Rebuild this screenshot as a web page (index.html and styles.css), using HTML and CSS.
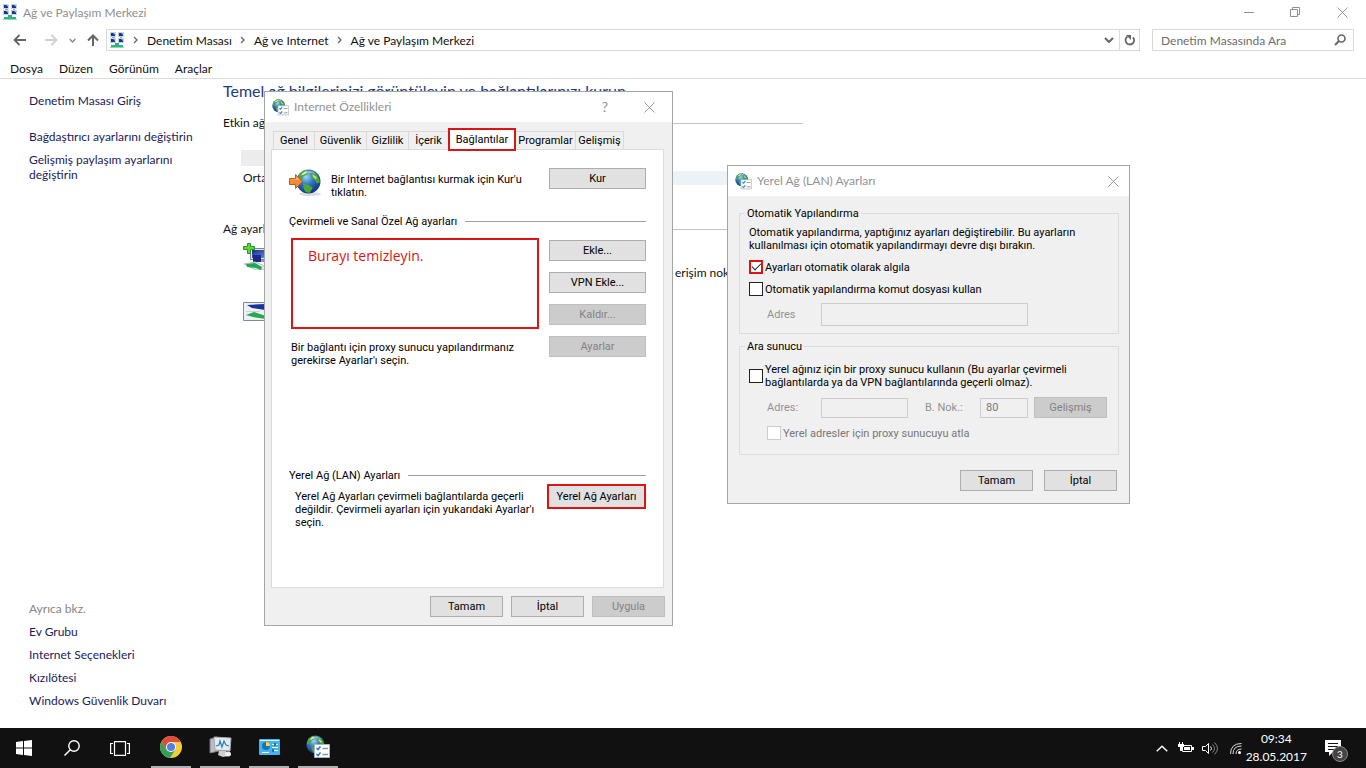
FILE: index.html
```html
<!DOCTYPE html>
<html lang="tr">
<head>
<meta charset="utf-8">
<title>Ağ ve Paylaşım Merkezi</title>
<link rel="stylesheet" href="styles.css">
</head>
<body>
<svg class="defs" aria-hidden="true">
  <defs>
    <radialGradient id="globeFill" cx="40%" cy="30%" r="70%">
      <stop offset="0" stop-color="#9fd8f5"/><stop offset=".45" stop-color="#3577c4"/><stop offset="1" stop-color="#12357a"/>
    </radialGradient>
    <linearGradient id="screenFill" x1="0" y1="0" x2="1" y2="1">
      <stop offset="0" stop-color="#1a2a8c"/><stop offset="1" stop-color="#6d92e0"/>
    </linearGradient>
    <symbol id="network" viewBox="0 0 16 16">
      <g fill="#c9d2dd"><path d="M1 0h6v5H1zM9 0h6v5H9zM1 6h6v5H1zM9 6h6v5H9z"/></g>
      <g fill="#17328f"><path d="M2 1h4v3H2zM10 1h4v3h-4zM2 7h4v3H2zM10 7h4v3h-4z"/></g>
      <path fill="#84a9e8" d="M4 1h2v2zM12 1h2v2zM4 7h2v2zM12 7h2v2z"/>
      <path fill="#98a5b5" d="M3 5h3v1H3zM11 5h2v1h-2z"/>
      <path fill="#2fb47c" d="M6 11h4v2h4v2H2v-2h4z"/><path fill="#8adbb4" d="M1 15h14v1H1z"/>
    </symbol>
    <symbol id="globe" viewBox="0 0 24 24">
      <circle cx="12" cy="12" r="11.5" fill="url(#globeFill)"/>
      <path fill="#4da63c" d="M3 5 8 1l4 1-1 3-4 2-2 4-4 1zM15 3l4 1 3 5 1 4-3 1-2-4-3-1-1-3zM7 14l5 1 4 3-3 5-4-1-2-4z"/>
      <path fill="#b6e58b" d="m5 5 4-3 2 1-4 3zM16 5l4 3-1 2-3-3z"/>
      <path fill="#fff" opacity=".35" d="M4 7C7 1 16 0 19 5c-5-2-10-1-15 2z"/>
    </symbol>
    <symbol id="globe-list" viewBox="0 0 24 24">
      <svg width="19" height="19"><use href="#globe"/></svg>
      <path fill="#fff" stroke="#a9b3bd" d="M8.500 9.500h15v13h-15z"/>
      <path fill="none" stroke="#2b7cc9" stroke-width="1.600" d="m10.500 13 1.500 1.500 2.500-3M10.500 19l1.500 1.500 2.500-3"/>
      <path stroke="#8d969e" stroke-width="1.300" d="M16.500 13.500H22M16.500 19.500H22"/>
    </symbol>
    <symbol id="close" viewBox="0 0 12 12"><path fill="none" stroke="currentColor" d="m.5.5 11 11m0-11-11 11"/></symbol>
    <symbol id="chevron" viewBox="0 0 10 6"><path fill="none" stroke="currentColor" stroke-width="2" d="m1 1 4 4 4-4"/></symbol>
    <symbol id="caret" viewBox="0 0 5 8"><path fill="none" stroke="currentColor" stroke-width="1.300" d="m1 1 3 3-3 3"/></symbol>
    <symbol id="monitors" viewBox="0 0 28 24">
      <path fill="#e3e7ec" stroke="#7c8794" d="M7.500 2.500h19v11h-19z"/><path fill="url(#screenFill)" d="M9 4h16v8H9z"/>
      <path fill="#1a2a8c" d="M10 9h8v7h-8z"/><path fill="#8e9cae" d="M18 14h6v2h-6z"/>
      <path fill="#dff3e5" stroke="#b5c3bb" d="m1 18 11-2 8 3 2 4-9 1z"/><path fill="#23a557" d="m3 18 9-1 7 4-1 3-5-2-9-1z"/>
    </symbol>
  </defs>
</svg>

<div class="desktop">
  <main class="explorer">
    <header class="titlebar">
      <svg class="icon16"><use href="#network"/></svg>
      <h1>Ağ ve Paylaşım Merkezi</h1>
      <div class="window-buttons">
        <button aria-label="Simge durumuna küçült"><svg width="10" height="10"><path stroke="currentColor" d="M0 5.500h10"/></svg></button>
        <button aria-label="Önceki boyut"><svg width="10" height="10"><path fill="none" stroke="currentColor" d="M.5 2.500h7v7h-7zM2.500 2.500v-2h7v7h-2"/></svg></button>
        <button aria-label="Kapat"><svg width="11" height="11"><use href="#close"/></svg></button>
      </div>
    </header>

    <div class="address-row">
      <div class="nav-buttons">
        <button class="back" aria-label="Geri"><svg width="13" height="12"><path fill="none" stroke="#666" stroke-width="1.800" d="M13 6H1.500M6.500 1l-5 5 5 5"/></svg></button>
        <button aria-label="İleri" disabled><svg width="13" height="12"><path fill="none" stroke="#d0d0d0" stroke-width="1.800" d="M0 6h11.500M6.500 1l5 5-5 5"/></svg></button>
        <button aria-label="Son konumlar"><svg width="7" height="5"><use href="#chevron"/></svg></button>
        <button aria-label="Yukarı"><svg width="12" height="12"><path fill="none" stroke="#666" stroke-width="2" d="M6 12V2M1 6.500l5-5 5 5"/></svg></button>
      </div>
      <nav class="address" aria-label="Adres">
        <svg class="icon16"><use href="#network"/></svg>
        <svg class="caret"><use href="#caret"/></svg><a href="#">Denetim Masası</a>
        <svg class="caret"><use href="#caret"/></svg><a href="#">Ağ ve Internet</a>
        <svg class="caret"><use href="#caret"/></svg><a href="#">Ağ ve Paylaşım Merkezi</a>
        <button class="drop" aria-label="Önceki konumlar"><svg width="10" height="6"><use href="#chevron"/></svg></button>
        <button class="refresh" aria-label="Yenile"><svg width="12" height="12"><path fill="none" stroke="#666" stroke-width="1.800" d="M3.500 2.600A4.300 4.300 0 1 0 9 3.300"/><path fill="#666" d="M2 1h5v5z"/></svg></button>
      </nav>
      <label class="search">
        <input type="search" placeholder="Denetim Masasında Ara" aria-label="Denetim Masasında Ara">
        <svg width="12" height="12"><circle cx="7.500" cy="4.500" r="3.500" fill="none" stroke="#666" stroke-width="1.600"/><path stroke="#666" stroke-width="2" d="M5 7 1 11"/></svg>
      </label>
    </div>

    <nav class="menubar" aria-label="Menü">
      <button>Dosya</button><button>Düzen</button><button>Görünüm</button><button>Araçlar</button>
    </nav>

    <div class="body">
      <aside class="sidebar">
        <div class="side-top">
          <a class="home" href="#">Denetim Masası Giriş</a>
          <a href="#">Bağdaştırıcı ayarlarını değiştirin</a>
          <a href="#">Gelişmiş paylaşım ayarlarını değiştirin</a>
        </div>
        <div class="side-bottom">
          <span class="muted">Ayrıca bkz.</span>
          <a href="#">Ev Grubu</a>
          <a href="#">Internet Seçenekleri</a>
          <a href="#">Kızılötesi</a>
          <a href="#">Windows Güvenlik Duvarı</a>
        </div>
      </aside>
      <section class="content">
        <h2>Temel ağ bilgilerinizi görüntüleyin ve bağlantılarınızı kurun</h2>
        <div class="rule first"><span>Etkin ağlar</span></div>
        <div class="net-name"></div>
        <div class="net-row"><span>Ortak ağ</span><div class="net-link"></div></div>
        <div class="rule"><span>Ağ ayarları</span></div>
        <div class="task">
          <svg width="28" height="28" viewBox="0 0 28 28"><svg y="3" width="28" height="24"><use href="#monitors"/></svg><path fill="#62d23f" stroke="#279a1c" d="M4.500.5h3v3h4v3h-4v4h-3v-4h-4v-3h4z"/></svg>
          <span>erişim noktası</span>
        </div>
        <div class="task second">
          <svg width="28" height="20" viewBox="0 0 28 20"><path fill="#edf0f4" stroke="#818b96" d="M.5.5h27v18H.5z"/><path fill="#1b329e" d="m4 3 18-1v6L9 6z"/><path fill="#c7d1df" d="M3 9h14v1H3z"/><path fill="#27a84e" d="m3 13 8-3 12 4v3l-13-2z"/></svg>
        </div>
      </section>
    </div>
  </main>

  <section class="dialog internet" role="dialog" aria-labelledby="inet-title">
    <header class="dialog-title">
      <svg class="icon17"><use href="#globe-list"/></svg>
      <h2 id="inet-title">Internet Özellikleri</h2>
      <button class="help" aria-label="Yardım">?</button>
      <button aria-label="Kapat"><svg width="11" height="11"><use href="#close"/></svg></button>
    </header>
    <div class="tabs" role="tablist">
      <button role="tab" class="w42">Genel</button><button role="tab" class="w52">Güvenlik</button><button role="tab" class="w42">Gizlilik</button><button role="tab" class="w40">İçerik</button><button role="tab" class="active" aria-selected="true">Bağlantılar</button><button role="tab" class="w60">Programlar</button><button role="tab" class="w48">Gelişmiş</button>
    </div>
    <div class="panel" role="tabpanel">
      <div class="setup">
        <svg width="34" height="28" viewBox="0 0 34 28"><ellipse cx="21" cy="26" rx="11" ry="2" fill="#d9dde1"/><svg x="7" y="1" width="25" height="25"><use href="#globe"/></svg><path fill="#f58a34" stroke="#c55d17" d="M.5 10.500h6v-4l7 7-7 7v-4h-6z"/><path fill="#ffc187" d="M1 11h6.500V9l3 3z"/></svg>
        <p>Bir Internet bağlantısı kurmak için Kur'u tıklatın.</p>
        <button class="btn">Kur</button>
      </div>
      <h3 class="section">Çevirmeli ve Sanal Özel Ağ ayarları</h3>
      <div class="dialup">
        <div class="dialup-left">
          <div class="list" role="listbox" aria-label="Bağlantılar">Burayı temizleyin.</div>
          <p>Bir bağlantı için proxy sunucu yapılandırmanız gerekirse Ayarlar'ı seçin.</p>
        </div>
        <div class="dialup-buttons">
          <button class="btn">Ekle...</button>
          <button class="btn">VPN Ekle...</button>
          <button class="btn" disabled>Kaldır...</button>
          <button class="btn" disabled>Ayarlar</button>
        </div>
      </div>
      <h3 class="section lan-head">Yerel Ağ (LAN) Ayarları</h3>
      <div class="lan">
        <p>Yerel Ağ Ayarları çevirmeli bağlantılarda geçerli değildir. Çevirmeli ayarları için yukarıdaki Ayarlar'ı seçin.</p>
        <button class="btn marked">Yerel Ağ Ayarları</button>
      </div>
    </div>
    <footer class="actions">
      <button class="btn small">Tamam</button><button class="btn small">İptal</button><button class="btn small" disabled>Uygula</button>
    </footer>
  </section>

  <section class="dialog lan-dialog" role="dialog" aria-labelledby="lan-title">
    <header class="dialog-title">
      <svg class="icon17"><use href="#globe-list"/></svg>
      <h2 id="lan-title">Yerel Ağ (LAN) Ayarları</h2>
      <button aria-label="Kapat"><svg width="11" height="11"><use href="#close"/></svg></button>
    </header>
    <div class="groups">
      <fieldset>
        <legend>Otomatik Yapılandırma</legend>
        <p>Otomatik yapılandırma, yaptığınız ayarları değiştirebilir. Bu ayarların kullanılması için otomatik yapılandırmayı devre dışı bırakın.</p>
        <label class="check"><input class="marked" type="checkbox" checked>Ayarları otomatik olarak algıla</label>
        <label class="check"><input type="checkbox">Otomatik yapılandırma komut dosyası kullan</label>
        <div class="field script"><label for="script-url">Adres</label><input id="script-url" type="text" disabled></div>
      </fieldset>
      <fieldset class="proxy">
        <legend>Ara sunucu</legend>
        <label class="check two"><input type="checkbox"><span>Yerel ağınız için bir proxy sunucu kullanın (Bu ayarlar çevirmeli bağlantılarda ya da VPN bağlantılarında geçerli olmaz).</span></label>
        <div class="field">
          <label for="proxy-url">Adres:</label><input id="proxy-url" type="text" disabled>
          <label class="port-label" for="port">B. Nok.:</label><input id="port" class="port" type="text" value="80" disabled>
          <button class="btn small" disabled>Gelişmiş</button>
        </div>
        <label class="check bypass"><input type="checkbox" disabled>Yerel adresler için proxy sunucuyu atla</label>
      </fieldset>
    </div>
    <footer class="actions">
      <button class="btn small">Tamam</button><button class="btn small">İptal</button>
    </footer>
  </section>

  <footer class="taskbar">
    <button aria-label="Başlat"><svg width="16" height="16"><path fill="#fff" d="m0 2 7-1v6.500H0zm8-1 8-1v7.500H8zM0 8.500h7V15l-7-1zm8 0h8V16l-8-1z"/></svg></button>
    <button aria-label="Ara"><svg width="16" height="16"><circle cx="10" cy="6" r="5.200" fill="none" stroke="#fff" stroke-width="1.400"/><path stroke="#fff" stroke-width="1.500" d="M6.300 9.700.5 15.500"/></svg></button>
    <button aria-label="Görev görünümü"><svg width="20" height="15"><path fill="none" stroke="#fff" stroke-width="1.200" d="M4.500.6h11v13.800h-11zM3 2.500H.6v10H3m14-10h2.400v10H17"/></svg></button>
    <div class="apps">
      <button aria-label="Chrome"><svg width="22" height="22" viewBox="0 0 22 22"><circle cx="11" cy="11" r="11" fill="#f8cb3b"/><path fill="#de4b3d" d="M1.500 5.500a11 11 0 0 1 19 0L21 6H11L6.500 14z"/><path fill="#35a05a" d="M1.500 5.500A11 11 0 0 0 10 22l5.500-8.500L11 16l-4.500-2z"/><circle cx="11" cy="11" r="5" fill="#fff"/><circle cx="11" cy="11" r="4" fill="#4c82e6"/></svg></button>
      <button aria-label="Sistem izleyicisi"><svg width="24" height="22" viewBox="0 0 24 22"><path fill="#b9bec2" stroke="#777" d="m2 3 7-2 2 14-9 2z"/><path fill="#cbd0d3" d="M11 15h7l2 5-5 1-5-2z"/><path fill="#e5ebee" stroke="#a2a9ae" d="m6 1 17 1-1 13-15-1z"/><path fill="none" stroke="#2781b0" stroke-width="1.200" d="m8 10 3-1 1-4 2 6 2-6 2 4 3 1"/><ellipse cx="20" cy="18" rx="3" ry="2.500" fill="#eee"/></svg></button>
      <button aria-label="Denetim Masası"><svg width="21" height="16" viewBox="0 0 21 16"><rect width="21" height="16" rx="1" fill="#45b4ec"/><path fill="#d7f2ff" d="M1 1h19v1H1z"/><circle cx="7" cy="7" r="4" fill="#1875b5"/><path fill="#ffd34d" d="M7 7V3a4 4 0 0 1 4 4z"/><path stroke="#fff" d="M13 5.500h6M13 8.500h6M13 11.500h6M3 13.500h7"/><path fill="#1875b5" d="M15 4h2v3h-2zM13 10h2v3h-2z"/></svg></button>
      <button aria-label="Internet Özellikleri"><svg width="24" height="24"><use href="#globe-list"/></svg></button>
    </div>
    <div class="tray">
      <svg width="12" height="7"><path fill="none" stroke="#fff" stroke-width="1.400" d="m.7 6.300 5.300-5 5.300 5"/></svg>
      <svg class="battery" width="16" height="12"><path fill="none" stroke="#fff" d="M4.500 3.500h9v6h-9z"/><path fill="#fff" d="M6 5h6v3H6zM14 5h2v3h-2zM1 0h1v2H1zM4 0h1v2H4zM0 2h6v3H4v4H2V5H0z"/></svg>
      <svg class="sound" width="16" height="13"><path fill="none" stroke="#fff" d="M.5 4.500h3l3-3v10l-3-3h-3zM8.500 4.500q2 2 0 4"/><path fill="none" stroke="#888" d="M10.500 2.500q4 4 0 8M12.500.5q6 6 0 12"/></svg>
      <svg class="wifi" width="13" height="13"><circle cx="10.500" cy="10.500" r="1.500" fill="#fff"/><path fill="none" stroke="#ddd" d="M7 12q0-5 5.500-5M4 12q0-8 8.500-8M1.500 12Q1.500 1.500 12.500 1.500"/></svg>
      <time datetime="2017-05-28T09:34">09:34<br>28.05.2017</time>
      <button class="notify" aria-label="Bildirimler"><svg width="16" height="16"><path fill="#fff" d="M0 0h16v12H8l-4 4v-4H0z"/><path stroke="#111" d="M3 3.500h10M3 6.500h10M3 9.500h6"/></svg><span class="badge">3</span></button>
    </div>
  </footer>
</div>
</body>
</html>
```
FILE: styles.css
```css
* { box-sizing: border-box; }
body { margin: 0; font-family: Lato, "Open Sans", sans-serif; font-size: 12px; color: #111; }
h1, h2, h3, p { margin: 0; font-weight: normal; font-size: inherit; }
a { color: inherit; text-decoration: none; }
button { margin: 0; padding: 0; border: 0; background: none; font: inherit; color: inherit; }
input { font: inherit; margin: 0; }
svg { display: block; flex: none; }
.defs { position: absolute; width: 0; height: 0; }
.icon16 { width: 16px; height: 16px; }
.icon17 { width: 17px; height: 17px; }

.desktop { position: relative; display: flex; flex-direction: column; min-height: 100vh; background: #fff; overflow: hidden; }
.explorer { flex: 1; display: flex; flex-direction: column; }

.titlebar { display: flex; align-items: center; height: 24px; padding-left: 2px; gap: 5px; color: #8f8f8f; }
.window-buttons { display: flex; margin-left: auto; height: 20px; }
.window-buttons button { width: 46px; display: grid; place-items: center; }
.window-buttons button:last-child { width: 48px; }

.address-row { display: flex; align-items: center; height: 32px; padding-right: 12px; }
.nav-buttons { flex: none; display: flex; align-items: center; width: 106px; padding-left: 13px; gap: 11px; color: #888; }
.nav-buttons .back { margin-right: 8px; }
.address { flex: 1; display: flex; align-items: center; height: 22px; border: 1px solid #d9d9d9; padding-left: 2px; }
.address .caret { width: 5px; height: 8px; margin: 0 9px 0 8px; color: #666; }
.address .drop { margin-left: auto; width: 20px; display: grid; place-items: center; color: #666; }
.address .refresh { width: 20px; height: 20px; display: grid; place-items: center; border-left: 1px solid #d9d9d9; }
.search { display: flex; align-items: center; width: 202px; height: 22px; margin-left: 12px; padding: 0 7px 0 8px; border: 1px solid #d9d9d9; }
.search input { flex: 1; min-width: 0; border: 0; padding: 0; outline: 0; background: none; }
.search input::placeholder { color: #6d6d6d; }

.menubar { display: flex; gap: 16px; height: 23px; padding: 2px 0 0 10px; border-bottom: 1px solid #dcdcdc; }

.body { flex: 1; display: flex; }
.sidebar { width: 223px; padding: 14px 32px 20px 29px; display: flex; flex-direction: column; justify-content: space-between; color: #1a1a5c; line-height: 15px; }
.side-top, .side-bottom { display: flex; flex-direction: column; gap: 8px; }
.side-top a { margin-right: -8px; }
.side-top .home { margin-bottom: 13px; }
.muted { color: #858585; }

.content { flex: 1; max-width: 580px; line-height: 16px; }
.content h2 { font-size: 16px; line-height: 24px; color: #1e3c7b; white-space: nowrap; }
.rule { display: flex; align-items: center; gap: 8px; height: 16px; }
.rule::after { content: ""; flex: 1; border-top: 1px solid #c4c4c4; }
.rule.first { margin-top: 12px; }
.net-name { width: 60px; height: 16px; margin: 19px 0 4px 18px; background: #ececec; }
.net-row { display: flex; align-items: center; margin: 0 0 35px 20px; }
.net-link { width: 160px; height: 14px; margin-left: 330px; background: #edf2f6; }
.task { display: flex; align-items: flex-end; padding: 6px 0 0 20px; gap: 404px; }
.task svg { align-self: flex-start; }
.task span { padding-top: 22px; }
.task.second { padding-top: 21px; }

.dialog { position: absolute; display: flex; flex-direction: column; background: #f0f0f0; border: 1px solid #a5a5a5; font: 11px/13px Roboto, "DejaVu Sans Condensed", sans-serif; color: #000; }
.internet { left: 264px; top: 91px; width: 409px; min-height: 535px; }
.lan-dialog { left: 727px; top: 165px; width: 403px; min-height: 339px; }
.dialog-title { display: flex; align-items: center; height: 30px; padding: 0 17px 0 7px; gap: 5px; background: #fff; color: #929292; font: 12px/16px Lato, "Open Sans", sans-serif; }
.lan-dialog .dialog-title { padding-right: 10px; }
.dialog-title h2 { flex: 1; }
.dialog-title .help { width: 12px; margin-right: 28px; font-size: 14px; }

.tabs { display: flex; align-items: flex-end; height: 27px; padding: 0 8px; }
.tabs button { height: 18px; border: 1px solid #d9d9d9; border-bottom: 0; border-left: 0; white-space: nowrap; display: grid; place-content: center; }
.tabs .w42 { width: 42px; }
.tabs .w52 { width: 52px; }
.tabs .w40 { width: 40px; }
.tabs .w60 { width: 60px; }
.tabs .w48 { width: 48px; }
.tabs button:first-child { border-left: 1px solid #d9d9d9; }
.tabs .active { z-index: 1; width: 68px; height: 23px; margin: 0 0 -2px -1px; border: 2px solid #dc1414; background: #fff; }

.btn { width: 97px; height: 21px; flex: none; border: 1px solid #adadad; background: #e1e1e1; color: #000; text-align: center; white-space: nowrap; }
.btn:disabled { background: #ccc; border-color: #bfbfbf; color: #838383; }
.btn.small { width: 73px; }
.btn.marked { width: 99px; height: 25px; border: 2px solid #dc1414; }

.panel { flex: 1; margin: 0 8px 0 6px; padding: 18px 17px 0; background: #fff; border: 1px solid #dcdcdc; }
.setup { display: flex; justify-content: space-between; gap: 8px; height: 47px; }
.setup p { flex: 1; padding-top: 5px; }
.section { display: flex; align-items: center; gap: 8px; }
.section::after { content: ""; flex: 1; border-top: 1px solid #a0a0a0; }
.dialup { display: flex; justify-content: space-between; padding: 10px 0 0 2px; }
.dialup-left { width: 248px; }
.list { height: 91px; padding: 7px 15px; border: 2px solid #dc1414; color: #dc1414; font: 14px/18px "Open Sans", "Noto Sans", sans-serif; }
.dialup-left p { margin-top: 12px; }
.dialup-buttons { display: flex; flex-direction: column; gap: 11px; padding-top: 2px; }
.lan-head { margin-top: 102px; }
.lan { display: flex; justify-content: space-between; padding: 2px 0 0 6px; }
.lan p { width: 244px; padding-top: 6px; }

.actions { display: flex; justify-content: flex-end; gap: 8px; padding: 8px 7px; }

.groups { flex: 1; padding: 11px 10px 0 11px; }
fieldset { margin: 0; padding: 6px 8px 7px 9px; border: 1px solid #dcdcdc; min-width: 0; }
legend { padding: 0 2px; margin-left: -4px; }
.check { display: flex; align-items: center; gap: 2px; height: 14px; margin-top: 8px; }
.check input { appearance: none; flex: none; width: 14px; height: 14px; border: 1px solid #222; background: #fff; display: grid; place-items: center; }
.check input:checked::after { content: ""; width: 8px; height: 4px; margin-top: -3px; border: solid #222; border-width: 0 0 1px 1px; transform: rotate(-45deg); }
.check input.marked { border: 2px solid #dc1414; }
.check input:disabled { border-color: #ccc; }
.field { display: flex; align-items: center; color: #929292; }
.field label { width: 54px; }
.field input { width: 87px; height: 20px; padding: 0 5px; border: 1px solid #ccc; background: #f0f0f0; color: #777; }
.script { margin-top: 7px; padding-left: 18px; }
.script input { width: 207px; height: 23px; }
.proxy { margin-top: 6px; padding-top: 4px; padding-bottom: 14px; }
.check.two { height: 26px; margin-top: 6px; }
.check.two span { max-width: 330px; }
.proxy .field { margin-top: 8px; padding-left: 18px; }
.proxy .port-label { margin-left: 17px; width: 55px; }
.proxy .port { width: 48px; }
.proxy .btn { margin-left: 6px; }
.bypass { margin: 8px 0 0 18px; color: #777; }
.lan-dialog .actions { gap: 11px; padding: 12px; }

.taskbar { display: flex; align-items: stretch; height: 40px; background: #111; color: #fff; }
.taskbar > button { width: 48px; display: grid; place-items: center; }
.apps { display: flex; gap: 9px; padding-left: 7px; }
.apps button { width: 40px; display: grid; place-items: center; border-bottom: 2px solid #b0b0b0; }
.tray { display: flex; align-items: center; margin-left: auto; padding-right: 25px; }
.tray .battery { margin-left: 10px; }
.tray .sound { margin-left: 8px; }
.tray .wifi { margin-left: 11px; }
.tray time { margin-left: 4px; line-height: 18px; text-align: center; }
.notify { position: relative; margin-left: 18px; }
.badge { position: absolute; left: 7px; top: 6px; width: 16px; height: 16px; border: 1px solid #888; border-radius: 50%; background: #444; font-size: 10px; line-height: 14px; }
```
